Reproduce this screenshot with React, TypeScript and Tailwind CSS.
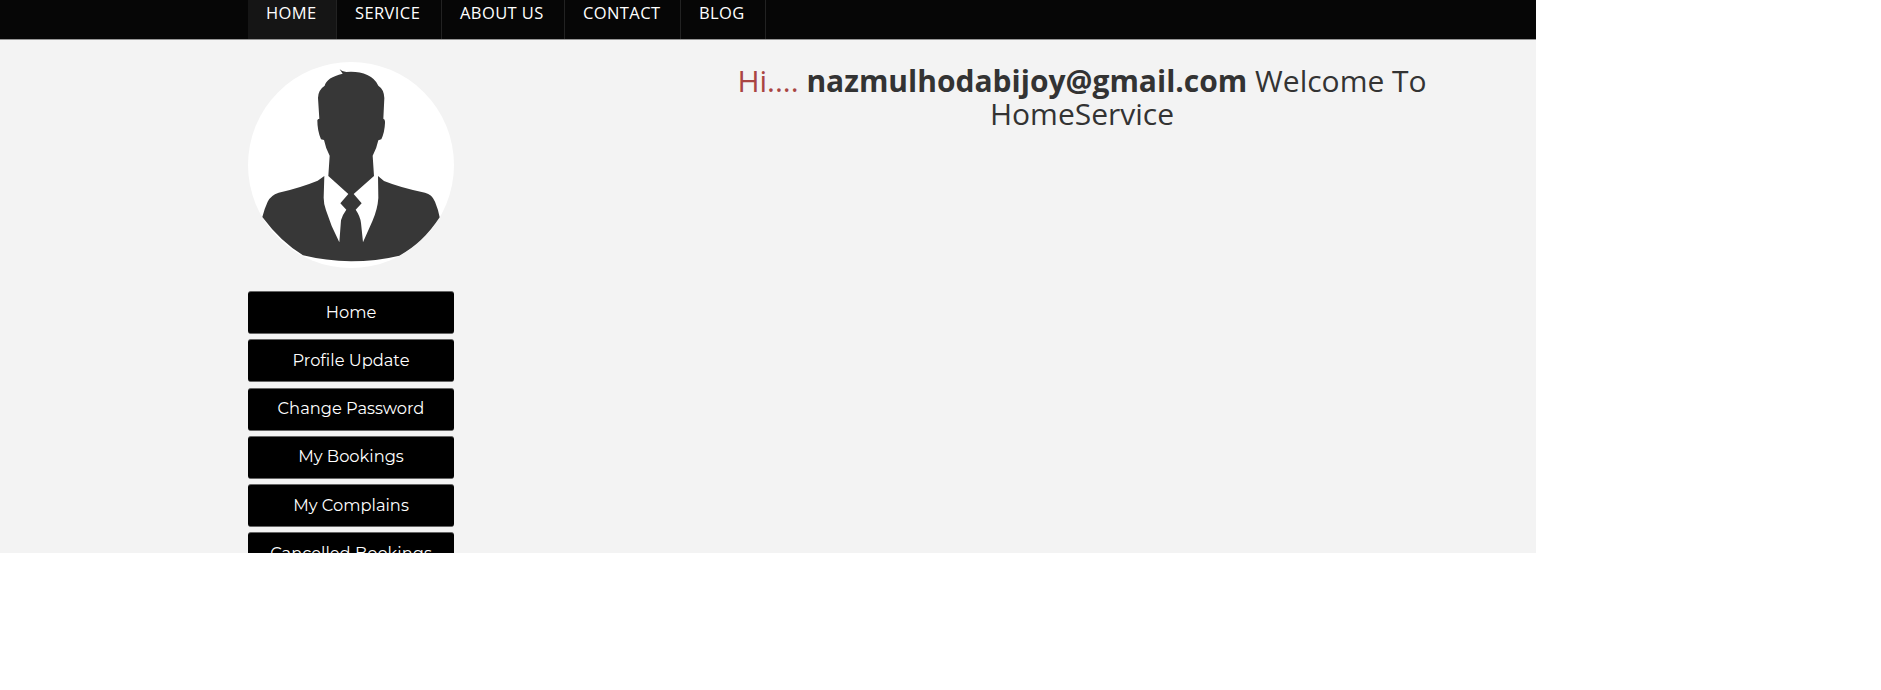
const navItems = [
  { label: 'HOME', box: 'w-[89px] bg-[#151515]' },
  { label: 'SERVICE', box: 'w-[105px]' },
  { label: 'ABOUT US', box: 'w-[123px]' },
  { label: 'CONTACT', box: 'w-[116px]' },
  { label: 'BLOG', box: 'w-[85px]' },
];

const links = [
  { label: 'Home', box: 'mb-[5px] leading-[41px]' },
  { label: 'Profile Update', box: 'mb-[6px] leading-[41px]' },
  { label: 'Change Password', box: 'mb-[5px] leading-[39px]' },
  { label: 'My Bookings', box: 'mb-[5px] leading-[39px]' },
  { label: 'My Complains', box: 'mb-[5px] leading-[41px]' },
  { label: 'Cancelled Bookings', box: 'leading-[41px]' },
];

function Avatar() {
  return (
    <svg viewBox="54 37 618 618" className="block h-[206px] w-[206px]">
      <circle cx="363" cy="346" r="309" fill="#fff" />
      <g fill="#373737">
        <path d="M329 59 Q337 67 349 67 Q385 64 412 76 Q436 87 445 108 Q462 119 463 145 L460 207 Q466 209 465 220 Q464 247 454 269 L445 272 Q440 297 428 318 L432 379 L371 433 L395 461 L377 480 Q391 500 393 520 L399 578 L427 515 Q443 478 445 445 L444 379 L462 394 Q514 415 585 429 Q606 434 615 456 Q625 480 629 503 Q579 580 508 618 Q438 635 363 635 Q288 634 219 617 Q151 575 97 502 Q104 475 113 456 Q122 437 146 429 Q209 415 263 393 L283 379 L281 444 Q281 463 288 482 Q303 531 328 578 L333 512 Q338 494 349 480 L331 461 L355 433 L295 379 L299 318 Q287 296 282 271 L273 269 Q262 244 262 212 Q263 207 268 207 L264 145 Q264 121 284 108 Q290 83 338 72 Z" />
      </g>
    </svg>
  );
}

export default function App() {
  return (
    <div className="h-[690px] w-full overflow-hidden bg-white font-['Open_Sans',sans-serif]">
      <div className="h-[553px] w-[1536px] overflow-hidden bg-[#f3f3f3]">
        <nav className="flex h-10 border-b border-[#959595] bg-[#060606] pl-[248px]">
          {navItems.map(({ label, box }) => (
            <a
              key={label}
              className={`flex h-[39px] whitespace-nowrap border-r border-[#222] pl-[18px] text-[16.5px] font-medium leading-[25px] tracking-[0.4px] text-white ${box}`}
            >
              {label}
            </a>
          ))}
        </nav>
        <main className="flex pl-[248px] pt-[22px]">
          <aside className="w-[206px] shrink-0">
            <Avatar />
            <div className="mt-[23px] flex flex-col">
              {links.map(({ label, box }) => (
                <a
                  key={label}
                  className={`h-[43px] shrink-0 whitespace-nowrap rounded-[3px] border-y border-[#666] bg-black text-center font-['Montserrat','Inter',sans-serif] text-[16.3px] text-white ${box}`}
                >
                  {label}
                </a>
              ))}
            </div>
          </aside>
          <h1 className="ml-[253px] mt-[2px] w-[750px] text-center text-[30px] font-normal leading-[33px] text-[#333]">
            <span className="text-[#a94442]">Hi....</span> <b className="font-bold">nazmulhodabijoy@gmail.com</b> Welcome To
            <br />
            HomeService
          </h1>
        </main>
      </div>
    </div>
  );
}
